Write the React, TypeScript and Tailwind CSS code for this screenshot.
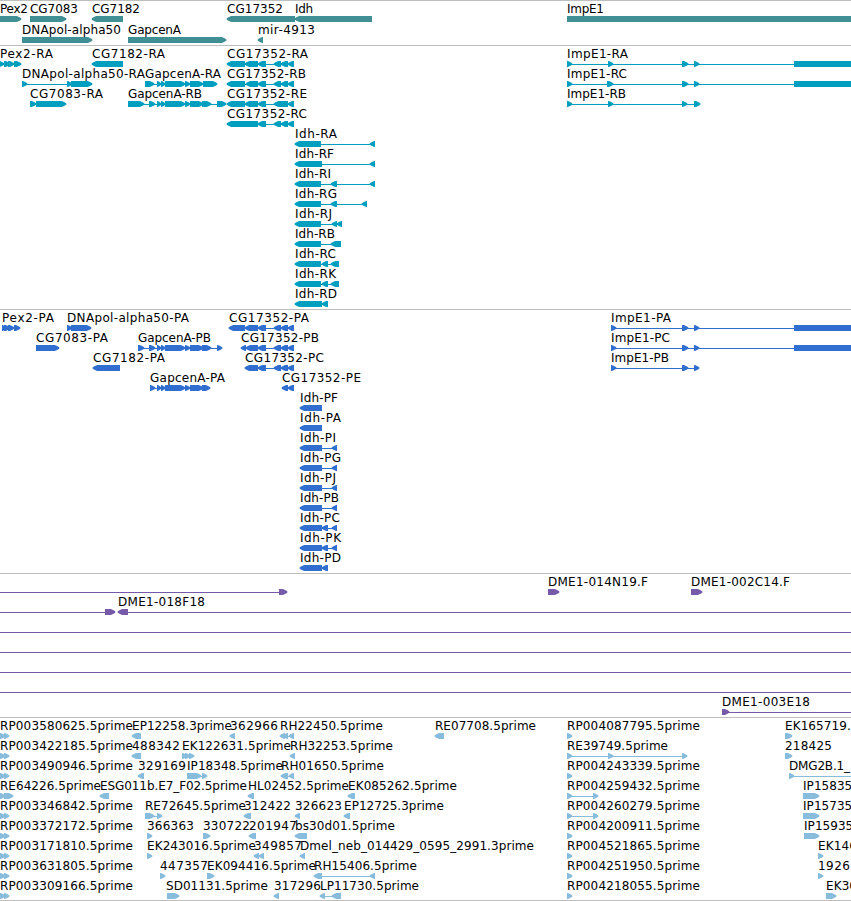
type Dir = 'r' | 'l'
type Part = [number, number]

// [label, x, label width, strand, exons]
type Feature = [string, number, number, Dir, Part[]]

interface TrackData {
  name: string
  color: string
  className: string
  rowClass: string
  rows: Feature[][]
}

const CG_TAIL: Part[] = [[258, 266], [274, 281], [281, 288], [288, 294]]
const GAP_MID: Part[] = [[157, 161], [161, 165], [165, 185], [185, 190], [190, 203]]
const IMP_TAIL: Part[] = [[682, 688], [694, 699], [794, 900]]
const RP_START: Part[] = [[0, 5], [4, 9]]

const GENES: Feature[][] = [
  [
    ['Pex2', 0, 28, 'r', [[-10, 21]]],
    ['CG7083', 30, 48, 'r', [[30, 66]]],
    ['CG7182', 92, 48, 'l', [[92, 123]]],
    ['CG17352', 227, 56, 'l', [[227, 295]]],
    ['Idh', 295, 18, 'l', [[295, 372]]],
    ['ImpE1', 567, 37, 'r', [[567, 900]]],
  ],
  [
    ['DNApol-alpha50', 22, 99, 'r', [[22, 92]]],
    ['GapcenA', 128, 53, 'r', [[128, 226]]],
    ['mir-4913', 258, 57, 'l', [[258, 263]]],
  ],
]

const TRANSCRIPTS: Feature[][] = [
  [
    ['Pex2-RA', 0, 53, 'r', [[-3, 4], [4, 10], [8, 14], [14, 21]]],
    ['CG7182-RA', 92, 73, 'l', [[92, 123]]],
    ['CG17352-RA', 227, 81, 'l', [[227, 245], [245, 258], ...CG_TAIL]],
    ['ImpE1-RA', 567, 61, 'r', [[567, 572], [608, 613], ...IMP_TAIL]],
  ],
  [
    ['DNApol-alpha50-RA', 22, 123, 'r', [[22, 27], [67, 72], [71, 92]]],
    ['GapcenA-RA', 145, 76, 'r', [[145, 154], ...GAP_MID, [203, 217]]],
    ['CG17352-RB', 227, 79, 'l', [[227, 245], [246, 258], ...CG_TAIL]],
    ['ImpE1-RC', 567, 60, 'r', [[567, 572], [607, 613], ...IMP_TAIL]],
  ],
  [
    ['CG7083-RA', 30, 73, 'r', [[30, 36], [36, 66]]],
    ['GapcenA-RB', 128, 74, 'r', [[128, 144], [149, 155], ...GAP_MID, [202, 211], [217, 226]]],
    ['CG17352-RE', 227, 80, 'l', [[227, 245], [245, 258], [258, 266], [274, 288], [288, 294]]],
    ['ImpE1-RB', 567, 59, 'r', [[567, 572], [608, 613], [682, 687], [694, 700]]],
  ],
  [['CG17352-RC', 227, 80, 'l', [[227, 258], ...CG_TAIL]]],
  [['Idh-RA', 295, 42, 'l', [[295, 321], [370, 375]]]],
  [['Idh-RF', 295, 39, 'l', [[295, 322], [370, 375]]]],
  [['Idh-RI', 295, 36, 'l', [[295, 321], [331, 337], [370, 375]]]],
  [['Idh-RG', 295, 42, 'l', [[295, 321], [331, 337], [362, 367]]]],
  [['Idh-RJ', 295, 37, 'l', [[295, 321], [332, 337], [337, 342]]]],
  [['Idh-RB', 295, 40, 'l', [[295, 321], [331, 341]]]],
  [['Idh-RC', 295, 41, 'l', [[295, 321], [322, 328], [331, 339]]]],
  [['Idh-RK', 295, 41, 'l', [[295, 321], [322, 328], [331, 339]]]],
  [['Idh-RD', 295, 42, 'l', [[295, 322], [322, 328]]]],
]

const PROTEINS: Feature[][] = [
  [
    ['Pex2-PA', 2, 52, 'r', [[2, 6], [4, 10], [8, 14], [14, 20]]],
    ['DNApol-alpha50-PA', 67, 122, 'r', [[67, 72], [71, 91]]],
    ['CG17352-PA', 229, 80, 'l', [[229, 245], [245, 258], ...CG_TAIL]],
    ['ImpE1-PA', 611, 60, 'r', [[611, 616], ...IMP_TAIL]],
  ],
  [
    ['CG7083-PA', 36, 72, 'r', [[36, 59]]],
    ['GapcenA-PB', 138, 73, 'r', [[138, 144], [149, 155], ...GAP_MID, [202, 211], [217, 222]]],
    ['CG17352-PB', 241, 78, 'l', [[241, 246], [246, 258], ...CG_TAIL]],
    ['ImpE1-PC', 611, 59, 'r', [[611, 616], ...IMP_TAIL]],
  ],
  [
    ['CG7182-PA', 93, 72, 'l', [[93, 120]]],
    ['CG17352-PC', 245, 79, 'l', [[245, 258], ...CG_TAIL]],
    ['ImpE1-PB', 611, 58, 'r', [[611, 616], [682, 688], [694, 699]]],
  ],
  [
    ['GapcenA-PA', 150, 75, 'r', [[150, 155], ...GAP_MID, [202, 210]]],
    ['CG17352-PE', 282, 79, 'l', [[282, 288], [288, 294]]],
  ],
  [['Idh-PF', 300, 38, 'l', [[300, 322]]]],
  [['Idh-PA', 300, 41, 'l', [[300, 322]]]],
  [['Idh-PI', 300, 36, 'l', [[300, 322], [332, 337]]]],
  [['Idh-PG', 300, 41, 'l', [[300, 322], [332, 337]]]],
  [['Idh-PJ', 300, 36, 'l', [[300, 322], [332, 337]]]],
  [['Idh-PB', 300, 39, 'l', [[300, 322], [332, 337]]]],
  [['Idh-PC', 300, 40, 'l', [[300, 322], [322, 328], [332, 337]]]],
  [['Idh-PK', 300, 41, 'l', [[300, 322], [322, 328], [332, 337]]]],
  [['Idh-PD', 300, 41, 'l', [[300, 322], [322, 328]]]],
]

const BACS: Feature[][] = [
  [
    ['', 0, 0, 'r', [[-20, -10], [279, 287]]],
    ['DME1-014N19.F', 548, 100, 'r', [[548, 559]]],
    ['DME1-002C14.F', 691, 99, 'r', [[691, 702]]],
  ],
  [
    ['', 0, 0, 'r', [[-20, -10], [105, 115]]],
    ['DME1-018F18', 118, 87, 'l', [[118, 128], [900, 910]]],
  ],
  [['', 0, 0, 'r', [[-20, -10], [900, 910]]]],
  [['', 0, 0, 'r', [[-20, -10], [900, 910]]]],
  [['', 0, 0, 'r', [[-20, -10], [900, 910]]]],
  [['', 0, 0, 'r', [[-20, -10], [900, 910]]]],
  [['DME1-003E18', 722, 88, 'r', [[722, 729], [900, 910]]]],
]

const ESTS: Feature[][] = [
  [
    ['RP003580625.5prime', 0, 133, 'r', RP_START],
    ['EP12258.3prime', 132, 100, 'l', [[132, 141]]],
    ['362966', 230, 48, 'l', [[230, 235]]],
    ['RH22450.5prime', 280, 103, 'l', [[280, 285], [283, 288], [289, 294]]],
    ['RE07708.5prime', 435, 101, 'l', [[435, 444]]],
    ['RP004087795.5prime', 567, 133, 'r', [[567, 572]]],
    ['EK165719.5prime', 785, 109, 'r', [[785, 792]]],
  ],
  [
    ['RP003422185.5prime', 0, 133, 'r', RP_START],
    ['488342', 132, 48, 'l', [[132, 141]]],
    ['EK122631.5prime', 182, 109, 'r', [[182, 187], [185, 190], [189, 194]]],
    ['RH32253.5prime', 290, 103, 'l', [[290, 295]]],
    ['RE39749.5prime', 567, 101, 'r', [[567, 572], [608, 613], [682, 687]]],
    ['218425', 785, 47, 'r', [[785, 792]]],
  ],
  [
    ['RP003490946.5prime', 0, 133, 'r', RP_START],
    ['329169', 138, 48, 'l', [[138, 144]]],
    ['IP18348.5prime', 187, 96, 'r', [[187, 201], [202, 207]]],
    ['RH01650.5prime', 281, 103, 'l', [[281, 288], [289, 294]]],
    ['RP004243339.5prime', 567, 133, 'r', [[567, 572]]],
    ['DMG2B.1_', 789, 61, 'r', [[789, 794], [900, 905]]],
  ],
  [
    ['RE64226.5prime', 0, 101, 'r', [[0, 5], [4, 13]]],
    ['ESG011b.E7_F02.5prime', 100, 147, 'l', [[100, 109]]],
    ['HL02452.5prime', 248, 101, 'l', [[248, 254]]],
    ['EK085262.5prime', 348, 109, 'l', [[348, 355]]],
    ['RP004259432.5prime', 567, 133, 'r', [[567, 572], [593, 598]]],
    ['IP15835.5prime', 803, 96, 'r', [[803, 819]]],
  ],
  [
    ['RP003346842.5prime', 0, 133, 'r', RP_START],
    ['RE72645.5prime', 145, 101, 'r', [[145, 154], [157, 162]]],
    ['312422', 244, 47, 'l', [[244, 251]]],
    ['326623', 295, 47, 'l', [[295, 300]]],
    ['EP12725.3prime', 344, 100, 'l', [[344, 350]]],
    ['RP004260279.5prime', 567, 133, 'r', [[567, 572], [593, 598]]],
    ['IP15735.5prime', 803, 96, 'r', [[803, 819]]],
  ],
  [
    ['RP003372172.5prime', 0, 133, 'r', RP_START],
    ['366363', 147, 47, 'r', [[147, 152]]],
    ['330722', 203, 47, 'r', [[203, 210]]],
    ['201947', 249, 48, 'l', [[249, 256]]],
    ['bs30d01.5prime', 295, 100, 'l', [[295, 307]]],
    ['RP004200911.5prime', 567, 133, 'r', [[567, 572]]],
    ['IP15935.5prime', 804, 96, 'r', [[804, 819]]],
  ],
  [
    ['RP003171810.5prime', 0, 133, 'r', RP_START],
    ['EK243016.5prime', 147, 109, 'r', [[147, 152]]],
    ['349857', 254, 48, 'l', [[254, 259], [259, 264]]],
    ['Dmel_neb_014429_0595_2991.3prime', 300, 234, 'l', [[300, 305]]],
    ['RP004521865.5prime', 567, 133, 'r', [[567, 572]]],
    ['EK146', 818, 39, 'r', [[818, 823]]],
  ],
  [
    ['RP003631805.5prime', 0, 133, 'r', RP_START],
    ['447357', 160, 48, 'r', [[160, 165]]],
    ['EK094416.5prime', 207, 109, 'r', [[207, 214]]],
    ['RH15406.5prime', 314, 103, 'l', [[314, 322], [370, 375]]],
    ['RP004251950.5prime', 567, 133, 'r', [[567, 572]]],
    ['1926', 818, 32, 'r', [[818, 823]]],
  ],
  [
    ['RP003309166.5prime', 0, 133, 'r', RP_START],
    ['SD01131.5prime', 166, 102, 'r', [[167, 179]]],
    ['317296', 274, 47, 'l', [[274, 279]]],
    ['LP11730.5prime', 320, 99, 'l', [[320, 325], [332, 341]]],
    ['RP004218055.5prime', 567, 133, 'r', [[567, 572]]],
    ['EK30', 826, 31, 'r', [[826, 836]]],
  ],
]

const TRACKS: TrackData[] = [
  { name: 'genes', color: '#3f8f94', className: 'pb-[2px]', rowClass: 'h-[21px]', rows: GENES },
  { name: 'transcripts', color: '#009fbf', className: 'pb-[3px]', rowClass: 'h-5', rows: TRANSCRIPTS },
  { name: 'proteins', color: '#306fcf', className: 'pb-[3px]', rowClass: 'h-5', rows: PROTEINS },
  { name: 'bacs', color: '#7759a9', className: 'pb-[3px]', rowClass: 'h-5', rows: BACS },
  { name: 'ests', color: '#88bcdd', className: 'border-b pb-[2px]', rowClass: 'h-5', rows: ESTS },
]

// bar with a blunt arrow head on the strand side
function exonPoints([a, b]: Part, dir: Dir) {
  const head = Math.min(4.5, b - a - 0.5)
  const tip = dir === 'r' ? b + 0.3 : a - 0.3
  const tail = dir === 'r' ? a : b
  const s = dir === 'r' ? -1 : 1
  const neck = tip + s * head
  const mid = tip + s * head * 0.5
  return `${tail},15 ${neck},15 ${mid},16 ${tip},17.2 ${tip},18.8 ${mid},20 ${neck},21 ${tail},21`
}

function FeatureGlyph({ feature, color }: { feature: Feature; color: string }) {
  const [label, x, width, dir, parts] = feature
  const start = parts[0][0]
  const end = parts[parts.length - 1][1]
  return (
    <g>
      {parts.length > 1 && (
        <rect x={start + 2} y={18} width={end - start - 4} height={1} fill={color} shapeRendering="crispEdges" />
      )}
      {parts.map((part, i) => (
        <polygon key={i} points={exonPoints(part, dir)} fill={color} />
      ))}
      {label && (
        <text x={x} y={12} textLength={width} lengthAdjust="spacing" fill="#000">
          {label}
        </text>
      )}
    </g>
  )
}

function Track({ track }: { track: TrackData }) {
  return (
    <section className={`border-t border-[#bebebe] ${track.className}`}>
      {track.rows.map((row, i) => (
        <div key={i} className={track.rowClass}>
          <svg width="851" height="20" className="block overflow-visible">
            {row.map((feature, j) => (
              <FeatureGlyph key={j} feature={feature} color={track.color} />
            ))}
          </svg>
        </div>
      ))}
    </section>
  )
}

export default function App() {
  return (
    <main className="flex h-[901px] w-[851px] flex-col overflow-hidden bg-white font-['DejaVu_Sans',sans-serif] text-[12px]">
      {TRACKS.map((track) => (
        <Track key={track.name} track={track} />
      ))}
    </main>
  )
}
